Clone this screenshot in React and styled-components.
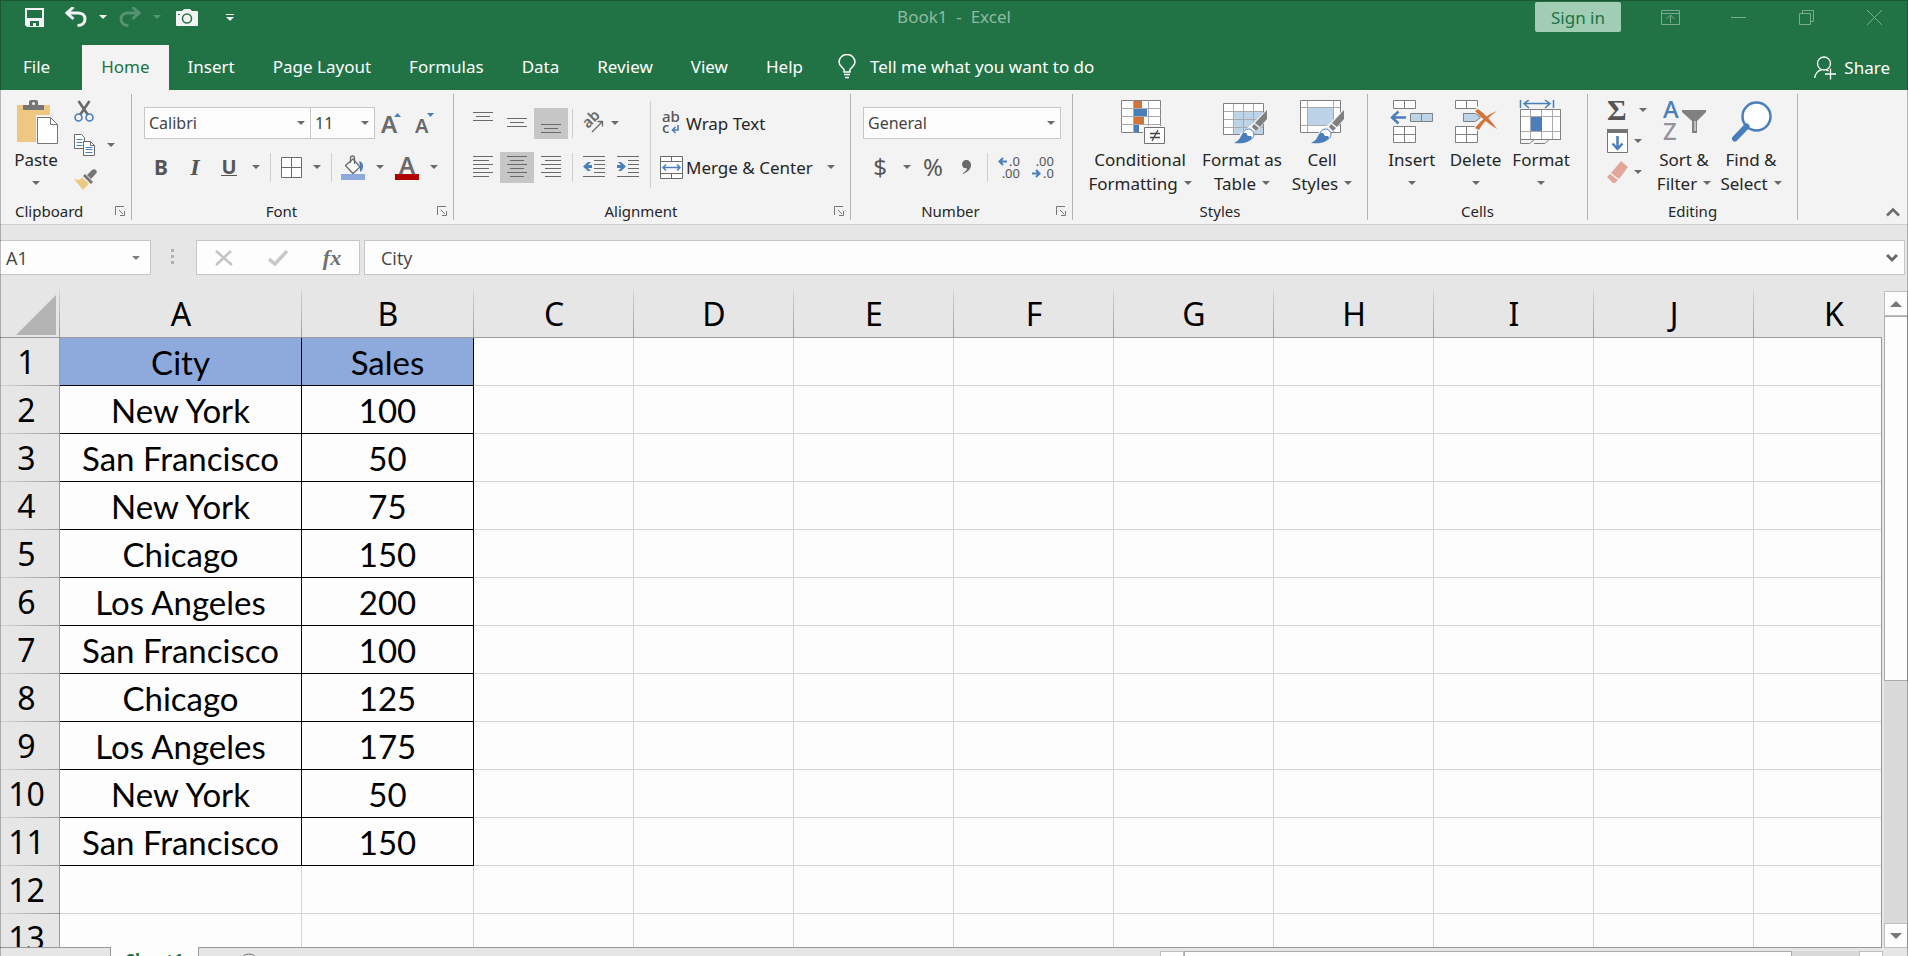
import React, { useState } from 'react'
import styled, { createGlobalStyle } from 'styled-components'

const ui = `'Noto Sans', 'Segoe UI', sans-serif`
const gray = '#6a6a6a'
const blue = '#4a7ebb'

const columns = ['A', 'B', 'C', 'D', 'E', 'F', 'G', 'H', 'I', 'J', 'K']
const sales = [
  ['City', 'Sales'],
  ['New York', 100],
  ['San Francisco', 50],
  ['New York', 75],
  ['Chicago', 150],
  ['Los Angeles', 200],
  ['San Francisco', 100],
  ['Chicago', 125],
  ['Los Angeles', 175],
  ['New York', 50],
  ['San Francisco', 150],
  [],
  [],
]
const tabs = ['Home', 'Insert', 'Page Layout', 'Formulas', 'Data', 'Review', 'View', 'Help']

const GlobalStyle = createGlobalStyle`
  * { box-sizing: border-box; }
  body { margin: 0; font-family: ${ui}; font-size: 17px; color: #262626; }
  button, input, select { font: inherit; color: inherit; margin: 0; }
  button { border: 0; padding: 0; background: none; white-space: nowrap; }
  svg { display: block; flex-shrink: 0; }
`

const Window = styled.div`
  position: relative;
  display: flex;
  flex-direction: column;
  height: 100vh;
  overflow: hidden;
  background: #e6e6e6;
  &::after {
    content: '';
    position: absolute;
    inset: 0;
    border: 1px solid rgba(0, 0, 0, 0.25);
    border-bottom: 0;
    pointer-events: none;
  }
`

/* title bar */

const TitleBar = styled.header`
  display: grid;
  grid-template-columns: 1fr auto 1fr;
  padding-bottom: 11px;
  background: #217346;
`
const QuickAccess = styled.div`
  display: flex;
  align-items: center;
  height: 34px;
  padding-left: 14px;
`
const QuickButton = styled.button`
  display: flex;
  align-items: center;
  justify-content: center;
  width: ${p => p.$w}px;
  height: 34px;
  color: #f3f3f3;
  opacity: ${p => (p.disabled ? 0.25 : 1)};
`
const DocTitle = styled.div`
  line-height: 34px;
  white-space: pre;
  color: #90b9a3;
`
const WindowButtons = styled.div`
  display: flex;
  align-items: center;
  justify-content: flex-end;
  height: 34px;
`
const SignIn = styled.button`
  width: 86px;
  height: 30px;
  margin-right: 15px;
  border-radius: 2px;
  background: #a0cdb4;
  color: #217346;
`
const WindowButton = styled.button`
  display: flex;
  align-items: center;
  justify-content: center;
  width: 68px;
  height: 34px;
  color: #7aab90;
`

/* tabs */

const TabBar = styled.nav`
  display: flex;
  height: 45px;
  background: #217346;
  color: #fff;
`
const FileTab = styled.button`
  padding: 0 32px 2px 23px;
`
const Tab = styled.button`
  padding: 0 19px 2px;
  background: ${p => (p.$active ? '#f3f3f3' : 'transparent')};
  color: ${p => (p.$active ? '#217346' : '#fff')};
`
const TellMe = styled.button`
  display: flex;
  flex: 1;
  align-items: center;
  gap: 14px;
  padding: 0 0 2px 16px;
`
const Share = styled.button`
  display: flex;
  align-items: center;
  gap: 8px;
  padding: 0 18px 0 0;
`

/* ribbon */

const Ribbon = styled.section`
  display: flex;
  height: 135px;
  padding: 4px 0;
  border-bottom: 1px solid #cfcfcf;
  background: #f3f3f3;
`
const Group = styled.div`
  display: flex;
  flex-direction: column;
  flex-shrink: 0;
  width: ${p => p.$w}px;
  border-right: 1px solid #b4b4b4;
`
const GroupBody = styled.div`
  display: flex;
  flex: 1;
  padding: 0 12px;
`
const GroupFooter = styled.div`
  display: flex;
  align-items: center;
  height: 18px;
  font-size: 15px;
  line-height: 18px;
`
const GroupLabel = styled.span`
  flex: 1;
  padding-left: ${p => (p.$start ? 15 : 0)}px;
  text-align: ${p => (p.$start ? 'left' : 'center')};
`
const Launcher = styled.button`
  display: flex;
  justify-content: flex-end;
  width: 16px;
  margin-right: 6px;
`
const Rows = styled.div`
  display: flex;
  flex-direction: column;
  gap: 12px;
  padding-top: 13px;
`
const Row = styled.div`
  display: flex;
  align-items: center;
  height: 32px;
`
const IconButton = styled.button`
  display: flex;
  align-items: center;
  justify-content: center;
  width: ${p => p.$w || 34}px;
  height: 31px;
  background: ${p => (p.$active ? '#c6c6c6' : 'transparent')};
  color: ${gray};
`
const OrientButton = styled.button`
  display: flex;
  align-items: center;
  gap: 7px;
  padding: 0 6px;
`
const Glyph = styled.span`
  font-family: ${p => (p.$serif ? `'Liberation Serif', serif` : ui)};
  font-size: ${p => p.$size || 21}px;
  font-weight: ${p => (p.$bold ? 700 : 400)};
  font-style: ${p => (p.$italic ? 'italic' : 'normal')};
  line-height: 1;
  color: ${p => p.$color || '#555'};
`
const Underlined = styled(Glyph)`
  line-height: 17px;
  border-bottom: 1px solid #555;
`
const Divider = styled.i`
  width: 1px;
  height: 29px;
  margin: 0 4px;
  background: #cfcfcf;
`
const TallDivider = styled.i`
  width: 1px;
  height: 87px;
  margin: 7px 8px 0 5px;
  background: #cfcfcf;
`
const TextButton = styled.button`
  display: flex;
  align-items: center;
  gap: 3px;
`
const TextButtonIcon = styled.span`
  display: flex;
  justify-content: center;
  width: 24px;
`
const MenuSpacer = styled.span`
  width: 8px;
`
const Picker = styled.label`
  position: relative;
  display: flex;
  align-items: center;
  width: ${p => p.$w}px;
  height: 32px;
  margin-right: ${p => (p.$joined ? -1 : 0)}px;
  select {
    width: 100%;
    height: 100%;
    padding: 0 20px 0 4px;
    border: 1px solid #c6c6c6;
    border-radius: 0;
    background: #fdfdfd;
    color: #444;
    font-size: 16px;
    appearance: none;
  }
  svg {
    position: absolute;
    right: 6px;
    pointer-events: none;
  }
`
const BigButton = styled.button`
  display: flex;
  flex-direction: column;
  align-items: center;
  width: ${p => p.$w}px;
  padding-top: 6px;
  > svg { margin-bottom: 3px; }
`
const BigLine = styled.span`
  display: flex;
  align-items: center;
  justify-content: center;
  gap: 6px;
  height: 24px;
`
const SmallStack = styled.div`
  display: flex;
  flex-direction: column;
  width: ${p => p.$w}px;
  padding-left: ${p => p.$pad}px;
`
const SmallButton = styled.button`
  display: flex;
  align-items: center;
  gap: ${p => p.$gap || 12}px;
  height: ${p => p.$h}px;
`
const RibbonEnd = styled.div`
  display: flex;
  flex: 1;
  align-items: flex-end;
  justify-content: flex-end;
  padding: 0 8px 3px 0;
`

/* formula bar */

const FormulaRow = styled.div`
  display: flex;
  height: 65px;
  padding: 15px 3px 15px 0;
`
const NameBox = styled.div`
  display: flex;
  align-items: center;
  width: 151px;
  padding-right: 10px;
  border: 1px solid #c6c6c6;
  border-left: 0;
  background: #fdfdfd;
`
const BarInput = styled.input`
  flex: 1;
  min-width: 0;
  padding: 0 0 0 ${p => p.$pad}px;
  border: 0;
  background: none;
  font-family: 'Open Sans', sans-serif;
  font-size: 18px;
  line-height: 26px;
  color: #444;
`
const Dots = styled.span`
  display: flex;
  flex-direction: column;
  gap: 3px;
  width: 45px;
  padding: 9px 0 0 20px;
  i { width: 3px; height: 3px; background: #b0b0b0; }
`
const EntryButtons = styled.div`
  display: flex;
  width: 164px;
  margin-right: 4px;
  border: 1px solid #c6c6c6;
  background: #fdfdfd;
  button {
    display: flex;
    flex: 1;
    align-items: center;
    justify-content: center;
  }
`
const FormulaBox = styled.div`
  display: flex;
  flex: 1;
  align-items: center;
  padding-right: 6px;
  border: 1px solid #c6c6c6;
  background: #fdfdfd;
`

/* sheet */

const Main = styled.main`
  display: flex;
  flex: 1;
  min-height: 0;
`
const Sheet = styled.div`
  position: relative;
  flex: 1;
  min-width: 0;
  overflow: hidden;
  border-bottom: 1px solid #999;
  &::after {
    content: '';
    position: absolute;
    top: 47px;
    right: 0;
    bottom: 0;
    width: 1px;
    background: #999;
  }
`
const Grid = styled.table`
  table-layout: fixed;
  width: 0;
  border-collapse: separate;
  border-spacing: 0;
  font-size: 32px;
  line-height: 40px;
  color: #000;
`
const Col = styled.col`
  width: ${p => p.$w}px;
`
const ColHead = styled.th`
  height: 48px;
  padding: 0;
  border-bottom: 1px solid #9b9b9b;
  background: linear-gradient(#d4d4d4, #9b9b9b) right / 1px 100% no-repeat #e6e6e6;
  font-weight: 400;
  button { display: flex; margin: 3px 0 0 16px; }
`
const RowHead = styled.th`
  height: 48px;
  padding: 0 6px 0 0;
  border-right: 1px solid #9b9b9b;
  background: linear-gradient(to right, #d4d4d4, #9b9b9b) bottom / 100% 1px no-repeat #e6e6e6;
  font-weight: 400;
`
const Cell = styled.td`
  height: 48px;
  padding: 0;
  border-right: 1px solid ${p => (p.$filled ? '#000' : '#d4d4d4')};
  border-bottom: 1px solid ${p => (p.$filled ? '#000' : '#d4d4d4')};
  background: ${p => (p.$title ? '#8ea9db' : '#fdfdfd')};
  font-family: Lato, Calibri, sans-serif;
  font-size: 33px;
  text-align: center;
  white-space: nowrap;
`
const ScrollBar = styled.div`
  display: flex;
  flex-direction: column;
  width: 24px;
  margin: 1px 0 0 2px;
  background: #dadada;
`
const ScrollButton = styled.button`
  display: flex;
  align-items: center;
  justify-content: center;
  width: 24px;
  height: 25px;
  border: 1px solid #c0c0c0;
  background: #fdfdfd;
`
const Thumb = styled.div`
  flex: ${p => p.$grow};
  border: 1px solid #ababab;
  background: #fdfdfd;
`
const Trough = styled.div`
  flex: ${p => p.$grow};
`
const BottomBar = styled.footer`
  display: flex;
  height: 8px;
  padding-left: 110px;
`
const SheetTab = styled.button`
  position: relative;
  width: 89px;
  height: 28px;
  margin-top: -1px;
  border: 1px solid #999;
  border-top: 0;
  background: #fdfdfd;
  color: #217346;
  font-size: 17px;
  font-weight: 700;
`
const AddSheet = styled.button`
  height: 22px;
  margin: 5px 0 0 39px;
`
const HorizontalScroll = styled.div`
  display: flex;
  width: 723px;
  height: 24px;
  margin: 3px 25px 0 auto;
  background: #dadada;
`

const Caret = ({ color = gray }) => (
  <svg width="8" height="4" viewBox="0 0 8 4"><path d="M0 0h8L4 4z" fill={color} /></svg>
)

const Lines = ({ rows, w = 20, h = 22 }) => (
  <svg width={w} height={h} viewBox={`0 0 ${w} ${h}`} shapeRendering="crispEdges">
    {rows.map(([x, y, len]) => <rect key={y} x={x} y={y} width={len} height="1" fill={gray} />)}
  </svg>
)

const alignRows = {
  left: [[0, 0, 20], [0, 4, 16], [0, 8, 20], [0, 12, 16], [0, 16, 20], [0, 20, 16]],
  center: [[0, 0, 20], [3, 4, 14], [0, 8, 20], [3, 12, 14], [0, 16, 20], [3, 20, 14]],
  right: [[0, 0, 20], [4, 4, 16], [0, 8, 20], [4, 12, 16], [0, 16, 20], [4, 20, 16]],
}

const Indent = ({ right }) => (
  <svg width="22" height="22" viewBox="0 0 22 22" fill={gray}>
    <path d="M0 0h22v1H0zM11 4h11v1H11zM11 8h11v1H11zM11 12h11v1H11zM11 16h11v1H11zM0 20h22v1H0z" />
    <path
      d={right ? 'M0 9h4L1 6h3l5 4.500-5 4.500H1l3-3H0z' : 'M9 9H5l3-3H5L0 10.500 5 15h3l-3-3h4z'}
      fill={blue}
    />
  </svg>
)

const LauncherIcon = () => (
  <svg width="10" height="10" viewBox="0 0 10 10" fill="none" stroke="#777">
    <path d="M.5 9V.5H9M4 4l4 4M9.500 5v4.500H5" />
  </svg>
)

const SaveIcon = () => (
  <svg width="19" height="19" viewBox="0 0 19 19" fill="none">
    <path d="M1 1h17v17H2.500L1 16.500z" stroke="currentColor" strokeWidth="2" />
    <path d="M1 10h17v8H1z" fill="currentColor" />
    <path d="M5 13h9v5h-3v-3H8v3H5z" fill="#217346" />
  </svg>
)

const UndoIcon = ({ flip }) => (
  <svg width="22" height="20" viewBox="0 0 22 20" fill="none" stroke="currentColor">
    <g transform={flip ? 'translate(22 0) scale(-1 1)' : undefined}>
      <path d="M2 6h11c4 0 7 2 7 6s-3 6.500-7.500 6.500" strokeWidth="3" />
      <path d="M8.500 0 2 6l6.500 6" strokeWidth="3" />
    </g>
  </svg>
)

const CameraIcon = () => (
  <svg width="22" height="17" viewBox="0 0 22 17">
    <path d="M1 2h5l2-2h6l2 2h5a1 1 0 0 1 1 1v13a1 1 0 0 1-1 1H1a1 1 0 0 1-1-1V3a1 1 0 0 1 1-1z" fill="currentColor" />
    <circle cx="11" cy="9.500" r="4.500" fill="none" stroke="#217346" strokeWidth="1.500" />
    <path d="M2 5h2v1H2z" fill="#217346" />
  </svg>
)

const BulbIcon = () => (
  <svg width="18" height="25" viewBox="0 0 18 25" fill="none" stroke="#fff" strokeWidth="1.500">
    <path d="M6 18v-2.500C4 13 1 11.500 1 8a8 7.500 0 0 1 16 0c0 3.500-3 5-5 7.500V18zM6 20.500h6M7 23.500h4" />
  </svg>
)

const ShareIcon = () => (
  <svg width="22" height="24" viewBox="0 0 22 24" fill="none" stroke="#fff" strokeWidth="1.300">
    <circle cx="10" cy="7.500" r="6.500" />
    <path d="M.7 22c.5-5 4-8 7-8M12 14c1 0 2 .4 2.500 1M16.500 12.500v11M11 18h11" />
  </svg>
)

const PasteIcon = () => (
  <svg width="48" height="44" viewBox="-4 2 48 44">
    <path d="M1 7h33v37H1z" fill="#eec880" />
    <path d="M7 12V7h6V4q0-2 2-2h5q2 0 2 2v3h6v5z" fill="#757575" />
    <circle cx="17.500" cy="5.500" r="1.500" fill="#f3f3f3" />
    <path d="M20 17h15l8 8v22H20z" fill="#f3f3f3" />
    <path d="M21.500 19.500h13l7 7v19h-20z" fill="#fff" stroke="#757575" />
    <path d="M34.500 19.500v7h7" fill="none" stroke="#757575" />
  </svg>
)

const CutIcon = () => (
  <svg width="20" height="22" viewBox="0 0 20 22" fill="none">
    <path d="M4.500 1 14 15M15.500 1 6 15" stroke={gray} strokeWidth="2.600" />
    <circle cx="4.500" cy="17.500" r="3.500" stroke={blue} strokeWidth="1.600" />
    <circle cx="15.500" cy="17.500" r="3.500" stroke={blue} strokeWidth="1.600" />
  </svg>
)

const CopyIcon = () => (
  <svg width="21" height="22" viewBox="0 0 21 22" fill="#fff" stroke={gray}>
    <path d="M.5.500h7l3 3v11H.5z" />
    <path d="M2.500 5.500h6M2.500 8.500h6M2.500 11.500h6" stroke={blue} />
    <path d="M9.500 7.500h7l4 4v10h-11z" />
    <path d="M16.500 7.500v4h4" fill="none" />
    <path d="M11.500 13.500h7M11.500 15.500h7M11.500 18.500h7" stroke={blue} />
  </svg>
)

const PainterIcon = () => (
  <svg width="23" height="21" viewBox="0 0 23 21">
    <path d="m0 10 5 1 3-2.500 7 6-6 6.500z" fill="#eec880" />
    <path d="m9 7 2-2 8 8-2 2zM13 6l5-5q2-1.500 4 0 1.500 2 0 3.500L17 10z" fill="#757575" />
  </svg>
)

const BordersIcon = () => (
  <svg width="21" height="21" viewBox="0 0 21 21" fill="#fff" stroke={gray}>
    <path d="M.5.500h20v20H.5zM10.500.500v20M.5 10.500h20" />
  </svg>
)

const FillIcon = () => (
  <svg width="24" height="25" viewBox="0 0 24 25" fill="none" stroke={gray}>
    <path d="M18 6q4 1 4 5c0 3-1 5-3 6V11z" fill={blue} stroke="none" />
    <path d="m12 4 7 8-7 6.500-7.500-8z" fill="#fff" strokeWidth="1.300" />
    <path d="M9.500 8V3q0-2 2-2t2 2v6" strokeWidth="1.300" />
    <path d="M0 19h24v6H0z" fill="#8ea9db" stroke="none" />
  </svg>
)

const FontColorIcon = () => (
  <svg width="24" height="25" viewBox="0 0 24 25">
    <text x="12" y="19" textAnchor="middle" fontFamily="Noto Sans" fontSize="24" fontWeight="600" fill={gray}>A</text>
    <path d="M0 19h24v6H0z" fill="#b00000" />
  </svg>
)

const FontSizeIcon = ({ size, down }) => (
  <svg width="22" height="24" viewBox="0 0 22 24">
    <text x="0" y="22" fontFamily="Noto Sans" fontSize={size} fontWeight="600" fill={gray}>A</text>
    <path d={down ? 'M12 2h7l-3.500 4z' : 'M13 6h7l-3.500-4z'} fill={blue} />
  </svg>
)

const OrientIcon = () => (
  <svg width="21" height="22" viewBox="0 0 21 22">
    <text x="0" y="0" transform="translate(5 17) rotate(-45)" fontFamily="Noto Sans" fontSize="15" fontWeight="600" fill={gray}>ab</text>
    <path d="M9 20 19.500 9.500M14.500 9.500h5v5" fill="none" stroke={gray} strokeWidth="1.300" />
  </svg>
)

const WrapIcon = () => (
  <svg width="18" height="24" viewBox="0 0 18 24" fontFamily="Noto Sans" fontSize="15" fontWeight="500" fill="#555">
    <text x="0" y="11">ab</text>
    <text x="0" y="22">c</text>
    <path d="M16 14v5h-5M13.500 16l-3 3 3 3" fill="none" stroke={blue} strokeWidth="1.600" />
  </svg>
)

const MergeIcon = () => (
  <svg width="23" height="23" viewBox="0 0 23 23" fill="#fff" stroke={gray}>
    <path d="M.5.500h22v22H.5zM.5 5.500h22M.5 17.500h22M11.500.500v5M11.500 17.500v5" />
    <path d="M3 11.500h17M6 8.500l-3 3 3 3M17 8.500l3 3-3 3" fill="none" stroke={blue} strokeWidth="1.500" />
  </svg>
)

const DecimalIcon = ({ more }) => (
  <svg width="23" height="24" viewBox="0 0 23 24" fontFamily="Noto Sans" fontSize="13" fill="#555" textAnchor="end">
    <text x="22" y="11">{more ? '.0' : '.00'}</text>
    <text x="22" y="23">{more ? '.00' : '.0'}</text>
    <path
      d={more ? 'M9 6.500H2M5 3 1.500 6.500 5 10' : 'M0 18.500h7M4 15l3.500 3.500L4 22'}
      fill="none" stroke={blue} strokeWidth="2"
    />
  </svg>
)

const Brush = () => (
  <g>
    <path d="M44 9v11L34 31l-7 1-4 12H9l9-11 11-9z" fill="#f3f3f3" />
    <path d="M44 10v9l-7 8-5-4zM31 24l5 4-3 3-4-4z" fill="#808080" />
    <circle cx="25.500" cy="34.500" r="5.500" fill="#fff" stroke={blue} />
    <path d="M11 43q5-2 7-7c2-4 6-4 6-1 2 2 4 0 5 2-2 6-10 7-18 6z" fill={blue} />
  </g>
)

const ConditionalIcon = () => (
  <svg width="50" height="44" viewBox="-6 0 50 44">
    <path d="M.5.500h39v32H.5z" fill="#fff" stroke="#808080" />
    <path d="M0 8.500h40M0 16.500h40M0 24.500h40M12.500 0v33M27.500 0v33" stroke="#aaa" />
    <path d="M13 1h8v7h-8zM13 17h10v7H13z" fill="#d0743c" />
    <path d="M13 9h13v7H13zM13 25h5v7h-5z" fill={blue} />
    <path d="M22 26h22v18H22z" fill="#f3f3f3" />
    <path d="M23.500 27.500h20v16h-20z" fill="#fff" stroke="#707070" />
    <path d="M29 33.500h10M29 37.500h10M37 30l-6 11" fill="none" stroke="#444" strokeWidth="1.300" />
  </svg>
)

const FormatTableIcon = () => (
  <svg width="50" height="44" viewBox="-6 0 50 44">
    <path d="M.5 3.500h40v31H.5z" fill="#fff" stroke="#808080" />
    <path d="M10 12h30v22H10z" fill="#bdd3e8" />
    <path d="M1 11.500h39M1 19.500h39M1 27.500h39M10.500 4v30M20.500 4v30M30.500 4v30" stroke="#aaa" />
    <Brush />
  </svg>
)

const CellStylesIcon = () => (
  <svg width="44" height="44" viewBox="0 0 44 44">
    <path d="M.5.500h40v32H.5z" fill="#fff" stroke="#808080" />
    <path d="M1 7.500h39M1 25.500h39M7.500 1v31M33.500 1v31" stroke="#aaa" />
    <path d="M8 8h25v17H8z" fill="#bdd3e8" />
    <Brush />
  </svg>
)

const InsertIcon = () => (
  <svg width="44" height="44" viewBox="0 0 44 44" fill="#fff" stroke="#808080">
    <path d="M3.500.500h22v8h-22zM14.500.500v8M3.500 26.500h22v16h-22zM3.500 34.500h22M14.500 26.500v16" />
    <path d="M20.500 13.500h22v8h-22zM31.500 13.500v8" fill="#bdd3e8" />
    <path d="M16 17.500H2M8.500 11.500l-6.500 6 6.500 6" fill="none" stroke={blue} strokeWidth="2.500" />
  </svg>
)

const DeleteIcon = () => (
  <svg width="44" height="44" viewBox="0 0 44 44" fill="#fff" stroke="#808080">
    <path d="M1.500.500h22v8h-22zM12.500.500v8M1.500 26.500h22v16h-22zM1.500 34.500h22M12.500 26.500v16" />
    <path d="M9.500 13.500h12l5 4-5 4h-12z" fill="#bdd3e8" />
    <path d="M22 9q8 3 20 20M42 11Q30 17 22 30" stroke="#f3f3f3" strokeWidth="6" fill="none" />
    <path d="m21 11 3-2q10 7 19 20-12-7-22-18zM43 11q-12 8-18 19l-4-2Q31 15 43 11z" fill="#d0743c" stroke="none" />
  </svg>
)

const FormatIcon = () => (
  <svg width="44" height="44" viewBox="-1 0 44 44" fill="#fff" stroke="#808080">
    <path d="M.5 9.500h40v30H.5z" />
    <path d="M1 16.500h39M1 31.500h39M10.500 10v29M21.500 10v29M32.500 10v29" stroke="#aaa" />
    <path d="M11 17h11v14H11z" fill={blue} stroke="none" />
    <path d="M.5 39.500v4h9l5-4M14 43.500h11l4-4M.5 9.500h40v30H.5z" fill="none" />
    <path d="M.5 0v8M33.500 0v8M4 3.500h26M9 0 4 3.500 9 8M25 0l5 3.500L25 8" fill="none" stroke={blue} strokeWidth="1.500" />
  </svg>
)

const FillDownIcon = () => (
  <svg width="21" height="24" viewBox="0 0 21 24">
    <path d="M.5.500h20v23H.5z" fill="#fff" stroke="#757575" />
    <path d="M0 0h21v4H0z" fill="#757575" />
    <path d="M10.500 7v13M5.500 14.500l5 5.500 5-5.500" fill="none" stroke={blue} strokeWidth="2.500" />
  </svg>
)

const EraserIcon = () => (
  <svg width="21" height="22" viewBox="0 0 21 22" fill="#e2a79b">
    <path d="m14 0 7 6-9 12-8-6zM3 13l8 6-3 3H6l-6-6z" />
  </svg>
)

const SortIcon = () => (
  <svg width="44" height="44" viewBox="0 0 44 44">
    <text x="1" y="18" fontFamily="Noto Sans" fontSize="24" fontWeight="500" fill={blue}>A</text>
    <text x="1" y="40" fontFamily="Noto Sans" fontSize="24" fontWeight="500" fill="#95919c">Z</text>
    <path d="M20 10h24v2l-9 9v12h-5V21l-10-9z" fill="#808080" />
    <path d="M33 21v10" stroke="#fff" />
  </svg>
)

const FindIcon = () => (
  <svg width="44" height="44" viewBox="0 0 44 44">
    <circle cx="27.500" cy="16.500" r="14" fill="#fff" stroke={blue} strokeWidth="2.500" />
    <path d="M17.500 26.500 6 38.500" stroke={blue} strokeWidth="6" strokeLinecap="round" />
  </svg>
)

function RibbonGroup({ label, w, launcher, start, children }) {
  return (
    <Group $w={w}>
      <GroupBody>{children}</GroupBody>
      <GroupFooter>
        <GroupLabel $start={start}>{label}</GroupLabel>
        {launcher && <Launcher aria-label={`${label} settings`}><LauncherIcon /></Launcher>}
      </GroupFooter>
    </Group>
  )
}

function Big({ icon, w, first, second }) {
  return (
    <BigButton $w={w}>
      {icon}
      <BigLine>{first}</BigLine>
      <BigLine>{second}<Caret /></BigLine>
    </BigButton>
  )
}

const Menu = ({ label }) => <IconButton $w={20} aria-label={label}><Caret /></IconButton>

export default function App() {
  const [tab, setTab] = useState('Home')
  const [formula, setFormula] = useState('City')
  const [name, setName] = useState('A1')

  return <>
    <GlobalStyle />
    <Window>
      <TitleBar>
        <QuickAccess>
          <QuickButton $w={40} aria-label="Save"><SaveIcon /></QuickButton>
          <QuickButton $w={44} aria-label="Undo"><UndoIcon /></QuickButton>
          <QuickButton $w={10} aria-label="Undo list"><Caret color="#f3f3f3" /></QuickButton>
          <QuickButton $w={44} disabled aria-label="Redo"><UndoIcon flip /></QuickButton>
          <QuickButton $w={10} disabled aria-label="Redo list"><Caret color="#f3f3f3" /></QuickButton>
          <QuickButton $w={50} aria-label="Camera"><CameraIcon /></QuickButton>
          <QuickButton $w={36} aria-label="Customize toolbar">
            <svg width="8" height="7" viewBox="0 0 8 7" fill="#f3f3f3"><path d="M0 0h8v1H0zM0 3h8L4 7z" /></svg>
          </QuickButton>
        </QuickAccess>
        <DocTitle>{'Book1  -  Excel'}</DocTitle>
        <WindowButtons>
          <SignIn>Sign in</SignIn>
          <WindowButton aria-label="Ribbon display">
            <svg width="19" height="15" viewBox="0 0 19 15" fill="none" stroke="currentColor"><path d="M.5.500h18v14H.5zM.5 3.500h18M9.500 13V5.500M5.500 9l4-4 4 4" /></svg>
          </WindowButton>
          <WindowButton aria-label="Minimize">
            <svg width="15" height="1" viewBox="0 0 15 1"><path d="M0 0h15v1H0z" fill="currentColor" /></svg>
          </WindowButton>
          <WindowButton aria-label="Restore">
            <svg width="15" height="15" viewBox="0 0 15 15" fill="none" stroke="currentColor"><path d="M.5 3.500h11v11H.5zM3.500 3.500v-3h11v11h-3" /></svg>
          </WindowButton>
          <WindowButton aria-label="Close">
            <svg width="15" height="15" viewBox="0 0 15 15" stroke="currentColor"><path d="m0 0 15 15M15 0 0 15" /></svg>
          </WindowButton>
        </WindowButtons>
      </TitleBar>

      <TabBar>
        <FileTab>File</FileTab>
        {tabs.map(t => <Tab key={t} $active={t === tab} onClick={() => setTab(t)}>{t}</Tab>)}
        <TellMe><BulbIcon />Tell me what you want to do</TellMe>
        <Share><ShareIcon />Share</Share>
      </TabBar>

      <Ribbon>
        <RibbonGroup label="Clipboard" w={132} launcher start>
          <Big icon={<PasteIcon />} w={48} first="Paste" />
          <SmallStack $w={60} $pad={14}>
            <SmallButton $h={34} aria-label="Cut"><CutIcon /></SmallButton>
            <SmallButton $h={34} aria-label="Copy"><CopyIcon /><Caret /></SmallButton>
            <SmallButton $h={34} aria-label="Format painter"><PainterIcon /></SmallButton>
          </SmallStack>
        </RibbonGroup>

        <RibbonGroup label="Font" w={322} launcher>
          <Rows>
            <Row>
              <Picker $w={167} $joined>
                <select aria-label="Font"><option>Calibri</option></select>
                <Caret />
              </Picker>
              <Picker $w={65}>
                <select aria-label="Font size"><option>11</option></select>
                <Caret />
              </Picker>
              <IconButton aria-label="Increase font size"><FontSizeIcon size={24} /></IconButton>
              <IconButton aria-label="Decrease font size"><FontSizeIcon size={20} down /></IconButton>
            </Row>
            <Row>
              <IconButton aria-label="Bold"><Glyph $bold>B</Glyph></IconButton>
              <IconButton aria-label="Italic"><Glyph $serif $bold $italic $size={24}>I</Glyph></IconButton>
              <IconButton aria-label="Underline"><Underlined $bold $size={20}>U</Underlined></IconButton>
              <Menu label="Underline styles" />
              <Divider />
              <IconButton $w={32} aria-label="Borders"><BordersIcon /></IconButton>
              <Menu label="Border styles" />
              <Divider />
              <IconButton $w={34} aria-label="Fill color"><FillIcon /></IconButton>
              <Menu label="Fill colors" />
              <IconButton $w={34} aria-label="Font color"><FontColorIcon /></IconButton>
              <Menu label="Font colors" />
            </Row>
          </Rows>
        </RibbonGroup>

        <RibbonGroup label="Alignment" w={397} launcher>
          <Rows>
            <Row>
              <IconButton aria-label="Top align"><Lines rows={[[0, 0, 20], [3, 4, 14], [0, 8, 20]]} /></IconButton>
              <IconButton aria-label="Middle align"><Lines rows={[[0, 6, 20], [3, 10, 14], [0, 14, 20]]} /></IconButton>
              <IconButton $active aria-label="Bottom align"><Lines rows={[[0, 12, 20], [3, 16, 14], [0, 20, 20]]} /></IconButton>
              <Divider />
              <OrientButton aria-label="Orientation"><OrientIcon /><Caret /></OrientButton>
            </Row>
            <Row>
              <IconButton aria-label="Align left"><Lines rows={alignRows.left} /></IconButton>
              <IconButton $active aria-label="Center"><Lines rows={alignRows.center} /></IconButton>
              <IconButton aria-label="Align right"><Lines rows={alignRows.right} /></IconButton>
              <Divider />
              <IconButton aria-label="Decrease indent"><Indent /></IconButton>
              <IconButton aria-label="Increase indent"><Indent right /></IconButton>
            </Row>
          </Rows>
          <TallDivider />
          <Rows>
            <Row>
              <TextButton><TextButtonIcon><WrapIcon /></TextButtonIcon>Wrap Text</TextButton>
            </Row>
            <Row>
              <TextButton>
                <TextButtonIcon><MergeIcon /></TextButtonIcon>
                Merge &amp; Center
                <MenuSpacer /><Caret />
              </TextButton>
            </Row>
          </Rows>
        </RibbonGroup>

        <RibbonGroup label="Number" w={222} launcher>
          <Rows>
            <Row>
              <Picker $w={198}>
                <select aria-label="Number format"><option>General</option></select>
                <Caret />
              </Picker>
            </Row>
            <Row>
              <IconButton aria-label="Currency"><Glyph $size={24}>$</Glyph></IconButton>
              <Menu label="Currencies" />
              <IconButton $w={32} aria-label="Percent"><Glyph $size={24}>%</Glyph></IconButton>
              <IconButton aria-label="Comma style">
                <svg width="9" height="14" viewBox="0 0 9 14"><path d="M4 0c3 0 5 2 5 5 0 4-3 7-8 9v-1c2-1 4-3 4-5-3 1-5-1-5-4 0-2 2-4 4-4z" fill={gray} /></svg>
              </IconButton>
              <Divider />
              <IconButton aria-label="Increase decimal"><DecimalIcon more /></IconButton>
              <IconButton aria-label="Decrease decimal"><DecimalIcon /></IconButton>
            </Row>
          </Rows>
        </RibbonGroup>

        <RibbonGroup label="Styles" w={295}>
          <Big icon={<ConditionalIcon />} w={110} first="Conditional" second="Formatting" />
          <Big icon={<FormatTableIcon />} w={94} first="Format as" second="Table" />
          <Big icon={<CellStylesIcon />} w={66} first="Cell" second="Styles" />
        </RibbonGroup>

        <RibbonGroup label="Cells" w={220}>
          <Big icon={<InsertIcon />} w={64} first="Insert" />
          <Big icon={<DeleteIcon />} w={64} first="Delete" />
          <Big icon={<FormatIcon />} w={68} first="Format" />
        </RibbonGroup>

        <RibbonGroup label="Editing" w={210}>
          <SmallStack $w={50} $pad={7}>
            <SmallButton $h={31} $gap={12} aria-label="AutoSum"><Glyph $size={30} $serif $bold>Σ</Glyph><Caret /></SmallButton>
            <SmallButton $h={31} $gap={6} aria-label="Fill"><FillDownIcon /><Caret /></SmallButton>
            <SmallButton $h={31} $gap={6} aria-label="Clear"><EraserIcon /><Caret /></SmallButton>
          </SmallStack>
          <Big icon={<SortIcon />} w={68} first="Sort &amp;" second="Filter" />
          <Big icon={<FindIcon />} w={66} first="Find &amp;" second="Select" />
        </RibbonGroup>

        <RibbonEnd>
          <button aria-label="Collapse ribbon">
            <svg width="14" height="10" viewBox="0 0 14 10"><path d="m1 8.500 6-6 6 6" fill="none" stroke="#6a6a6a" strokeWidth="2.500" /></svg>
          </button>
        </RibbonEnd>
      </Ribbon>

      <FormulaRow>
        <NameBox>
          <BarInput $pad={6} aria-label="Name box" value={name} onChange={e => setName(e.target.value)} />
          <Caret color="#808080" />
        </NameBox>
        <Dots><i /><i /><i /></Dots>
        <EntryButtons>
          <button aria-label="Cancel">
            <svg width="18" height="16" viewBox="0 0 18 16"><path d="m1 1 16 14M16 1 1 15" stroke="#c4c4c4" strokeWidth="2.500" /></svg>
          </button>
          <button aria-label="Enter">
            <svg width="20" height="16" viewBox="0 0 20 16"><path d="m1 9 6 5L19 1" fill="none" stroke="#c8c8c8" strokeWidth="3.500" /></svg>
          </button>
          <button aria-label="Insert function"><Glyph $serif $bold $italic $size={22} $color="#707070">fx</Glyph></button>
        </EntryButtons>
        <FormulaBox>
          <BarInput $pad={16} aria-label="Formula bar" value={formula} onChange={e => setFormula(e.target.value)} />
          <svg width="12" height="10" viewBox="0 0 12 10"><path d="m1 2 5 5 5-5" fill="none" stroke="#6a6a6a" strokeWidth="3" /></svg>
        </FormulaBox>
      </FormulaRow>

      <Main>
        <Sheet>
          <Grid>
            <colgroup>
              <Col $w={60} />
              <Col $w={242} />
              <Col $w={172} />
              {columns.slice(2).map(c => <Col key={c} $w={160} />)}
            </colgroup>
            <thead>
              <tr>
                <ColHead>
                  <button aria-label="Select all">
                    <svg width="40" height="40" viewBox="0 0 40 40"><path d="M40 0v40H0z" fill="#b4b4b4" /></svg>
                  </button>
                </ColHead>
                {columns.map(c => <ColHead key={c} scope="col">{c}</ColHead>)}
              </tr>
            </thead>
            <tbody>
              {sales.map((row, r) => (
                <tr key={r}>
                  <RowHead scope="row">{r + 1}</RowHead>
                  {columns.map((c, i) => (
                    <Cell key={c} $filled={row[i] !== undefined} $title={r === 0 && i < 2}>{row[i]}</Cell>
                  ))}
                </tr>
              ))}
            </tbody>
          </Grid>
        </Sheet>
        <ScrollBar>
          <ScrollButton aria-label="Scroll up">
            <svg width="12" height="6" viewBox="0 0 12 6"><path d="M0 6h12L6 0z" fill="#777" /></svg>
          </ScrollButton>
          <Thumb $grow={3} />
          <Trough $grow={2} />
          <ScrollButton aria-label="Scroll down">
            <svg width="12" height="6" viewBox="0 0 12 6"><path d="M0 0h12L6 6z" fill="#777" /></svg>
          </ScrollButton>
        </ScrollBar>
      </Main>

      <BottomBar>
        <SheetTab>Sheet1</SheetTab>
        <AddSheet aria-label="New sheet">
          <svg width="22" height="22" viewBox="0 0 22 22" fill="none" stroke="#777"><circle cx="11" cy="11" r="10" /><path d="M11 6v10M6 11h10" /></svg>
        </AddSheet>
        <HorizontalScroll>
          <ScrollButton aria-label="Scroll left" />
          <Thumb $grow={9} />
          <Trough $grow={1} />
          <ScrollButton aria-label="Scroll right" />
        </HorizontalScroll>
      </BottomBar>
    </Window>
  </>
}
